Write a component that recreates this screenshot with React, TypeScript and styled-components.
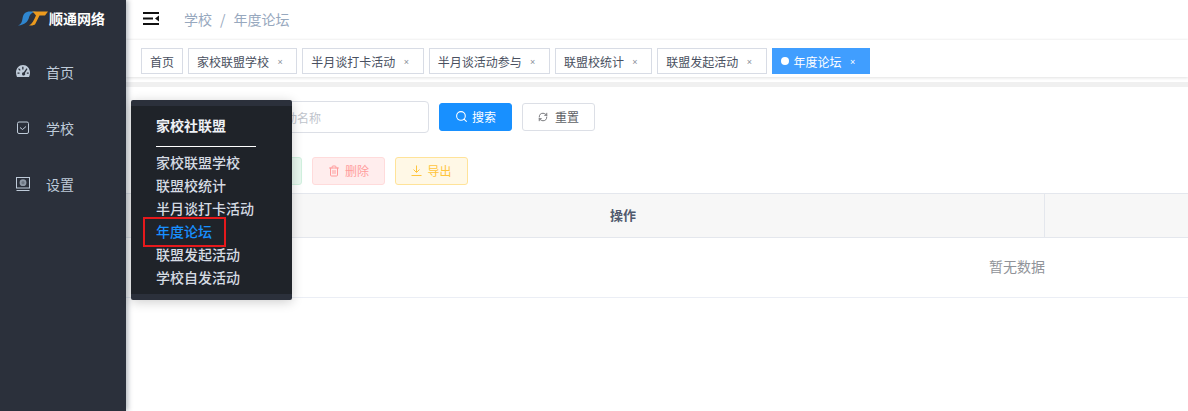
import React from "react";
import styled, { createGlobalStyle } from "styled-components";
import { Search, RefreshCw, Trash2 } from "lucide-react";

const Global = createGlobalStyle`
  html, body { margin: 0; padding: 0; height: 100%; background: #fff; }
  body { font-family: "Noto Sans CJK SC", "Liberation Sans", sans-serif; overflow: hidden; }
  #root { height: 100%; }
`;

const Page = styled.div`
  position: relative;
  display: flex;
  width: 1188px;
  height: 411px;
  overflow: hidden;
`;

const Sidebar = styled.aside`
  width: 126px;
  flex: none;
  background: #2b303b;
  box-shadow: 2px 0 5px rgba(0, 21, 41, 0.3);
  z-index: 2;
  display: flex;
  flex-direction: column;
`;

const Brand = styled.div`
  height: 40px;
  display: flex;
  align-items: center;
  padding-left: 18px;
  gap: 1px;
  margin-top: -2px;
`;

const BrandName = styled.span`
  color: #fff;
  font-size: 14px;
  font-weight: 700;
  line-height: 1;
`;

const Nav = styled.nav`
  display: flex;
  flex-direction: column;
  padding-top: 6px;
`;

const NavItem = styled.div`
  height: 56px;
  display: flex;
  align-items: center;
  gap: 16px;
  padding-left: 16px;
  color: #bfcbd9;
  font-size: 14px;
`;

const NavIcon = styled.svg`
  width: 14px;
  height: 14px;
  flex: none;
  color: #bfcbd9;
  overflow: visible;
`;

const Main = styled.main`
  flex: 1;
  min-width: 0;
  display: flex;
  flex-direction: column;
`;

const Header = styled.header`
  height: 40px;
  box-sizing: border-box;
  display: flex;
  align-items: center;
  padding: 0 0 3px 17px;
  gap: 25px;
  flex: none;
`;

const Crumbs = styled.div`
  display: flex;
  gap: 8px;
  color: #97a8be;
  font-size: 14px;
`;

const TagBar = styled.div`
  height: 37px;
  flex: none;
  box-sizing: border-box;
  padding: 8px 0 0 15px;
  display: flex;
  gap: 5px;
  align-items: flex-start;
  background: #fff;
  box-shadow: 0 1px 3px rgba(0, 0, 0, 0.12), 0 -1px 2px rgba(0, 0, 0, 0.04);
  z-index: 1;
`;

const Tag = styled.div<{ $active?: boolean; $plain?: boolean }>`
  height: 26px;
  box-sizing: border-box;
  display: flex;
  align-items: center;
  padding: 0 ${(p) => (p.$plain ? "8px" : "10.3px")} 0 8px;
  font-size: 12px;
  white-space: nowrap;
  background: ${(p) => (p.$active ? "#409eff" : "#fff")};
  color: ${(p) => (p.$active ? "#fff" : "#495060")};
  border: 1px solid ${(p) => (p.$active ? "#409eff" : "#d8dce5")};
`;

const Dot = styled.i`
  width: 8px;
  height: 8px;
  border-radius: 50%;
  background: #fff;
  margin-right: 5px;
`;

const Close = styled.span<{ $active?: boolean }>`
  margin-left: 5px;
  width: 12px;
  text-align: center;
  font-family: "Liberation Sans", sans-serif;
  font-size: 9px;
  line-height: 1;
  padding-top: 2px;
  color: ${(p) => (p.$active ? "#fff" : "#8a8f99")};
`;

const Band = styled.div`
  height: 5px;
  flex: none;
  margin-top: 5px;
  background: #f0f0f0;
`;

const Content = styled.div`
  display: flex;
  flex-direction: column;
`;

const SearchRow = styled.div`
  display: flex;
  align-items: center;
  margin: 14px 0 0 95px;
`;

const Input = styled.div`
  width: 208px;
  height: 32px;
  box-sizing: border-box;
  border: 1px solid #dcdfe6;
  border-radius: 4px;
  padding-left: 15px;
  display: flex;
  align-items: center;
  font-size: 12px;
  color: #c0c4cc;
  margin-right: 10px;
`;

const Btn = styled.button<{ $bg: string; $bd: string; $fg: string; $gap?: number }>`
  width: 73px;
  height: 28px;
  box-sizing: border-box;
  padding: 0 0 1px;
  display: flex;
  align-items: center;
  justify-content: center;
  gap: ${(p) => p.$gap ?? 5}px;
  font: inherit;
  font-size: 12px;
  border-radius: 3px;
  background: ${(p) => p.$bg};
  border: 1px solid ${(p) => p.$bd};
  color: ${(p) => p.$fg};
`;

const ResetBtn = styled(Btn)`
  margin-left: 10px;
`;

const ActionRow = styled.div`
  display: flex;
  gap: 10px;
  margin: 24px 0 0 103px;
`;

const Table = styled.div`
  margin-top: 8px;
  display: flex;
  flex-direction: column;
`;

const HeadRow = styled.div`
  display: grid;
  grid-template-columns: 76px 843px 1fr;
  height: 45px;
  box-sizing: border-box;
  background: #f7f7f7;
  border-top: 1px solid #e4e7ed;
  border-bottom: 1px solid #e4e7ed;
`;

const HeadCell = styled.div<{ $line?: boolean }>`
  display: flex;
  align-items: center;
  justify-content: center;
  padding-bottom: 2px;
  font-weight: 700;
  font-size: 13px;
  color: #515a6e;
  border-right: ${(p) => (p.$line ? "1px solid #e4e7ed" : "none")};
`;

const EmptyRow = styled.div`
  height: 60px;
  box-sizing: border-box;
  border-bottom: 1px solid #ebeef5;
`;

const EmptyText = styled.div`
  width: 1782px;
  height: 55px;
  display: flex;
  align-items: center;
  justify-content: center;
  font-size: 14px;
  color: #909399;
`;

const Flyout = styled.div`
  position: absolute;
  left: 131px;
  top: 100px;
  width: 161px;
  height: 200px;
  box-sizing: border-box;
  background: #1f2329;
  border-top: 6px solid #2b303b;
  border-bottom: 6px solid #2b303b;
  border-radius: 2px;
  padding: 8px 0 0 25px;
  z-index: 3;
  box-shadow: 0 2px 12px rgba(0, 0, 0, 0.2);
  display: flex;
  flex-direction: column;
`;

const FlyTitle = styled.div`
  color: #eef1f5;
  font-size: 14px;
  font-weight: 700;
  line-height: 22px;
  padding-bottom: 10px;
  width: 100px;
  border-bottom: 1px solid #fff;
  margin-bottom: 4px;
`;

const FlyItem = styled.div<{ $on?: boolean }>`
  position: relative;
  height: 23px;
  line-height: 23px;
  font-size: 14px;
  font-weight: 500;
  white-space: nowrap;
  color: ${(p) => (p.$on ? "#1890ff" : "#d5dbe3")};
`;

const Marker = styled.span`
  position: absolute;
  left: -13px;
  top: -3px;
  width: 83px;
  height: 30px;
  box-sizing: border-box;
  border: 2px solid #e5191c;
`;

const tabs = ["家校联盟学校", "半月谈打卡活动", "半月谈活动参与", "联盟校统计", "联盟发起活动"];
const fly = ["家校联盟学校", "联盟校统计", "半月谈打卡活动", "年度论坛", "联盟发起活动", "学校自发活动"];

export default function App() {
  return (
    <Page>
      <Global />
      <Sidebar>
        <Brand>
          <svg width="30" height="16" viewBox="0 0 30 16">
            <path d="M0 15.5C3 14.5 4 12 4.5 8.5C5 4 7.5 1.5 12 1.5H19C14 2 12 4 11 7.5C10 11.5 7 15 0 15.5Z" fill="#2f86cf" />
            <path d="M14 1.5H30L27 5.5H21.5L17 14.5C15.5 15.5 13 15.5 11 15.5C14 14 16 10 18 5.5C17 4 15.5 2.5 14 1.5Z" fill="#eb9a1e" />
          </svg>
          <BrandName>顺通网络</BrandName>
        </Brand>
        <Nav>
          <NavItem>
            <NavIcon viewBox="0 1 14 14">
              <path fillRule="evenodd" fill="currentColor" d="M7 1C11 1 14 4.5 14 8.5C14 10 13.7 11.7 13 13H1C.3 11.7 0 10 0 8.5C0 4.500 3 1 7 1ZM6.200 2.800V5.500H7.500V2.800ZM3 4.200 2.100 5.100 3.800 6.800 4.700 5.900ZM10.500 4.300 7.800 8.300A1.600 1.600 0 1 0 9 9.100L11.500 5ZM1.500 8.500V9.800H3.500V8.500ZM10.800 8.500V9.800H12.700V8.500Z" />
            </NavIcon>
            首页
          </NavItem>
          <NavItem>
            <NavIcon viewBox="0 0 14 14" fill="none" stroke="currentColor">
              <rect x="1.500" y="1" width="11" height="11.500" rx="1.500" />
              <path d="M4 6.500 6.500 8.500 10 5.500" />
            </NavIcon>
            学校
          </NavItem>
          <NavItem>
            <NavIcon viewBox="0 0 14 14" fill="none" stroke="currentColor">
              <rect x="0.500" y="0.500" width="13" height="10.500" />
              <circle cx="7" cy="5.700" r="3.400" fill="#8f99a6" stroke="none" />
              <circle cx="7" cy="5.700" r="1.600" fill="#6d7682" stroke="none" />
              <path d="M0.500 13.500h13" />
            </NavIcon>
            设置
          </NavItem>
        </Nav>
      </Sidebar>
      <Main>
        <Header>
          <svg width="16" height="13" viewBox="0 0 16 13">
            <path d="M0 1h16M0 6.500h10M0 12h16" stroke="#111" strokeWidth="2" />
            <path d="M16 3.500v6l-4-3Z" fill="#111" />
          </svg>
          <Crumbs>
            <span>学校</span>
            <span>/</span>
            <span>年度论坛</span>
          </Crumbs>
        </Header>
        <TagBar>
          <Tag $plain>首页</Tag>
          {tabs.map((t) => (
            <Tag key={t}>
              {t}
              <Close>×</Close>
            </Tag>
          ))}
          <Tag $active>
            <Dot />
            年度论坛
            <Close $active>×</Close>
          </Tag>
        </TagBar>
        <Band />
        <Content>
          <SearchRow>
            <Input>请输入活动名称</Input>
            <Btn $bg="#1890ff" $bd="#1890ff" $fg="#fff" $gap={4}>
              <Search size={13} />
              搜索
            </Btn>
            <ResetBtn $bg="#fff" $bd="#dcdfe6" $fg="#606266" $gap={7}>
              <RefreshCw size={10} />
              重置
            </ResetBtn>
          </SearchRow>
          <ActionRow>
            <Btn $bg="#e8f8ef" $bd="#d1f1df" $fg="#7fd6a5">修改</Btn>
            <Btn $bg="#ffeded" $bd="#ffdbdb" $fg="#ff9c9c">
              <Trash2 size={12} />
              删除
            </Btn>
            <Btn $bg="#fff8e6" $bd="#ffe399" $fg="#ffc53d">
              <svg width="11" height="11" viewBox="0 0 11 11" fill="none" stroke="currentColor">
                <path d="M5.500 0.500V7M2.500 4.500 5.500 7.500 8.500 4.500M0.500 10.500h10" />
              </svg>
              导出
            </Btn>
          </ActionRow>
          <Table>
            <HeadRow>
              <HeadCell />
              <HeadCell $line>操作</HeadCell>
              <HeadCell />
            </HeadRow>
            <EmptyRow>
              <EmptyText>暂无数据</EmptyText>
            </EmptyRow>
          </Table>
        </Content>
      </Main>
      <Flyout>
        <FlyTitle>家校社联盟</FlyTitle>
        {fly.map((f) => (
          <FlyItem key={f} $on={f === "年度论坛"}>
            {f === "年度论坛" && <Marker />}
            {f}
          </FlyItem>
        ))}
      </Flyout>
    </Page>
  );
}
